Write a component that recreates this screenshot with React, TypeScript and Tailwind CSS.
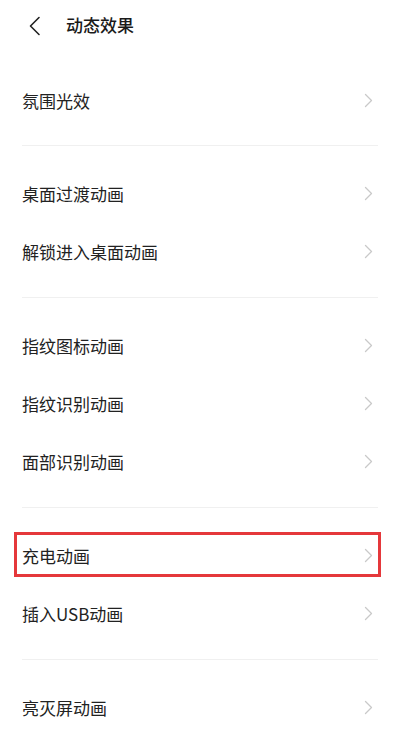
import React from 'react';

const groups: string[][] = [
  ['氛围光效'],
  ['桌面过渡动画', '解锁进入桌面动画'],
  ['指纹图标动画', '指纹识别动画', '面部识别动画'],
  ['充电动画', '插入USB动画'],
  ['亮灭屏动画'],
];

const Chevron: React.FC = () => (
  <svg width="9" height="15" viewBox="0 0 9 15" fill="none" className="shrink-0">
    <path d="M1.5 1.5 L7.5 7.5 L1.5 13.5" stroke="#c9c9c9" strokeWidth="1.3" strokeLinecap="round" strokeLinejoin="round" />
  </svg>
);

const Row: React.FC<{ label: string; marked?: boolean }> = ({ label, marked }) => (
  <div className="relative h-[58px] flex items-center justify-between pl-[22px] pr-[27px]">
    <span className="text-[17px] text-[#222222] leading-none">{label}</span>
    <Chevron />
    {marked && (
      <div className="absolute left-[14px] right-[19px] top-[6px] bottom-[7px] border-[3px] border-[#e5383b] pointer-events-none" />
    )}
  </div>
);

export default function App() {
  return (
    <div
      className="w-[400px] h-[747px] bg-white overflow-hidden"
      style={{ fontFamily: '"Noto Sans CJK SC", "Noto Sans", sans-serif' }}
    >
      <div className="h-12 flex items-center">
        <div className="w-[66px] flex items-center pl-[28px] pt-[4px]">
          <svg width="13" height="20" viewBox="0 0 13 20" fill="none">
            <path d="M11 1.5 L2.5 10 L11 18.5" stroke="#222222" strokeWidth="1.6" strokeLinecap="round" strokeLinejoin="round" />
          </svg>
        </div>
        <h1 className="text-[17px] font-medium text-[#1a1a1a] leading-none">动态效果</h1>
      </div>

      {groups.map((items, gi) => (
        <div key={gi}>
          <div className={gi === 0 ? 'pt-[23px] pb-[16px]' : 'pt-[18px] pb-[17px]'}>
            {items.map((label) => (
              <Row key={label} label={label} marked={label === '充电动画'} />
            ))}
          </div>
          {gi < groups.length - 1 && <div className="mx-[22px] h-px bg-[#f0f0f0]" />}
        </div>
      ))}
    </div>
  );
}
